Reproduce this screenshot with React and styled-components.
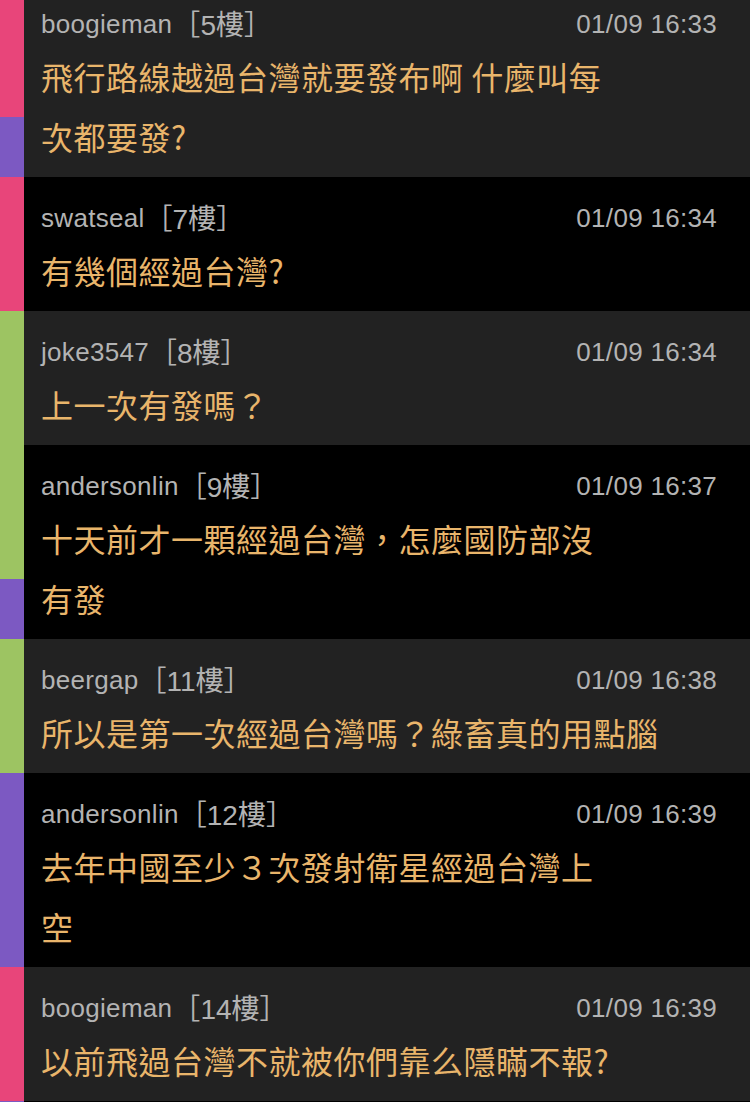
import styled, { createGlobalStyle } from "styled-components";

const GlobalStyle = createGlobalStyle`
  html, body {
    margin: 0;
    padding: 0;
    background: #000000;
  }
  body {
    overflow: hidden;
  }
`;

const COLORS = {
  pink: "#e8457a",
  purple: "#7c59c2",
  green: "#9dc462",
};

const comments = [
  {
    user: "boogieman",
    floor: 5,
    time: "01/09 16:33",
    lines: ["飛行路線越過台灣就要發布啊 什麼叫每", "次都要發?"],
    bar: ["pink", "purple"],
  },
  {
    user: "swatseal",
    floor: 7,
    time: "01/09 16:34",
    lines: ["有幾個經過台灣?"],
    bar: ["pink"],
  },
  {
    user: "joke3547",
    floor: 8,
    time: "01/09 16:34",
    lines: ["上一次有發嗎？"],
    bar: ["green"],
  },
  {
    user: "andersonlin",
    floor: 9,
    time: "01/09 16:37",
    lines: ["十天前才一顆經過台灣，怎麼國防部沒", "有發"],
    bar: ["green", "purple"],
  },
  {
    user: "beergap",
    floor: 11,
    time: "01/09 16:38",
    lines: ["所以是第一次經過台灣嗎？綠畜真的用點腦"],
    bar: ["green"],
  },
  {
    user: "andersonlin",
    floor: 12,
    time: "01/09 16:39",
    lines: ["去年中國至少３次發射衛星經過台灣上", "空"],
    bar: ["purple", "purple"],
  },
  {
    user: "boogieman",
    floor: 14,
    time: "01/09 16:39",
    lines: ["以前飛過台灣不就被你們靠么隱瞞不報?"],
    bar: ["pink"],
  },
  {
    user: "",
    floor: null,
    time: "",
    lines: [""],
    bar: ["purple"],
  },
];

const List = styled.div`
  margin-top: -17px;
  width: 750px;
`;

const Row = styled.div`
  display: flex;
  align-items: stretch;
  background: ${(p) => (p.$dark ? "#000000" : "#222222")};
`;

const Bar = styled.div`
  width: 24px;
  flex: none;
  display: flex;
  flex-direction: column;
`;

const Segment = styled.div`
  background: ${(p) => p.$color};
  ${(p) => (p.$first ? "flex: 1;" : "height: 60px; flex: none;")}
`;

const Body = styled.div`
  flex: 1;
  padding: 26px 33px 11px 17px;
`;

const Header = styled.div`
  display: flex;
  justify-content: space-between;
  align-items: baseline;
  height: 30px;
  line-height: 30px;
  margin-bottom: 7px;
  font-family: "Liberation Sans", "Noto Sans CJK TC", sans-serif;
  font-size: 26px;
  color: #b3b3b3;
`;

const Author = styled.span`
  white-space: nowrap;
  letter-spacing: 0.3px;
`;

const Floor = styled.span`
  font-family: "Liberation Sans", "Noto Sans CJK TC", sans-serif;
  font-size: 28px;
  line-height: 30px;
  letter-spacing: 0;
  vertical-align: -2px;
`;

const Time = styled.span`
  letter-spacing: 0.3px;
  white-space: nowrap;
`;

const Line = styled.div`
  height: 60px;
  line-height: 60px;
  font-family: "Noto Sans CJK TC", "Noto Sans CJK SC", sans-serif;
  font-size: 32px;
  letter-spacing: 0.5px;
  color: #e9b56b;
  white-space: nowrap;
`;

function Comment({ item, dark }) {
  return (
    <Row $dark={dark}>
      <Bar>
        {item.bar.map((c, i) => (
          <Segment key={i} $color={COLORS[c]} $first={i === 0} />
        ))}
      </Bar>
      <Body>
        <Header>
          <Author>
            {item.user}
            {item.floor !== null && <Floor>［{item.floor}樓］</Floor>}
          </Author>
          <Time>{item.time}</Time>
        </Header>
        {item.lines.map((l, i) => (
          <Line key={i}>{l}</Line>
        ))}
      </Body>
    </Row>
  );
}

export default function App() {
  return (
    <>
      <GlobalStyle />
      <List>
        {comments.map((c, i) => (
          <Comment key={i} item={c} dark={i % 2 === 1} />
        ))}
      </List>
    </>
  );
}
